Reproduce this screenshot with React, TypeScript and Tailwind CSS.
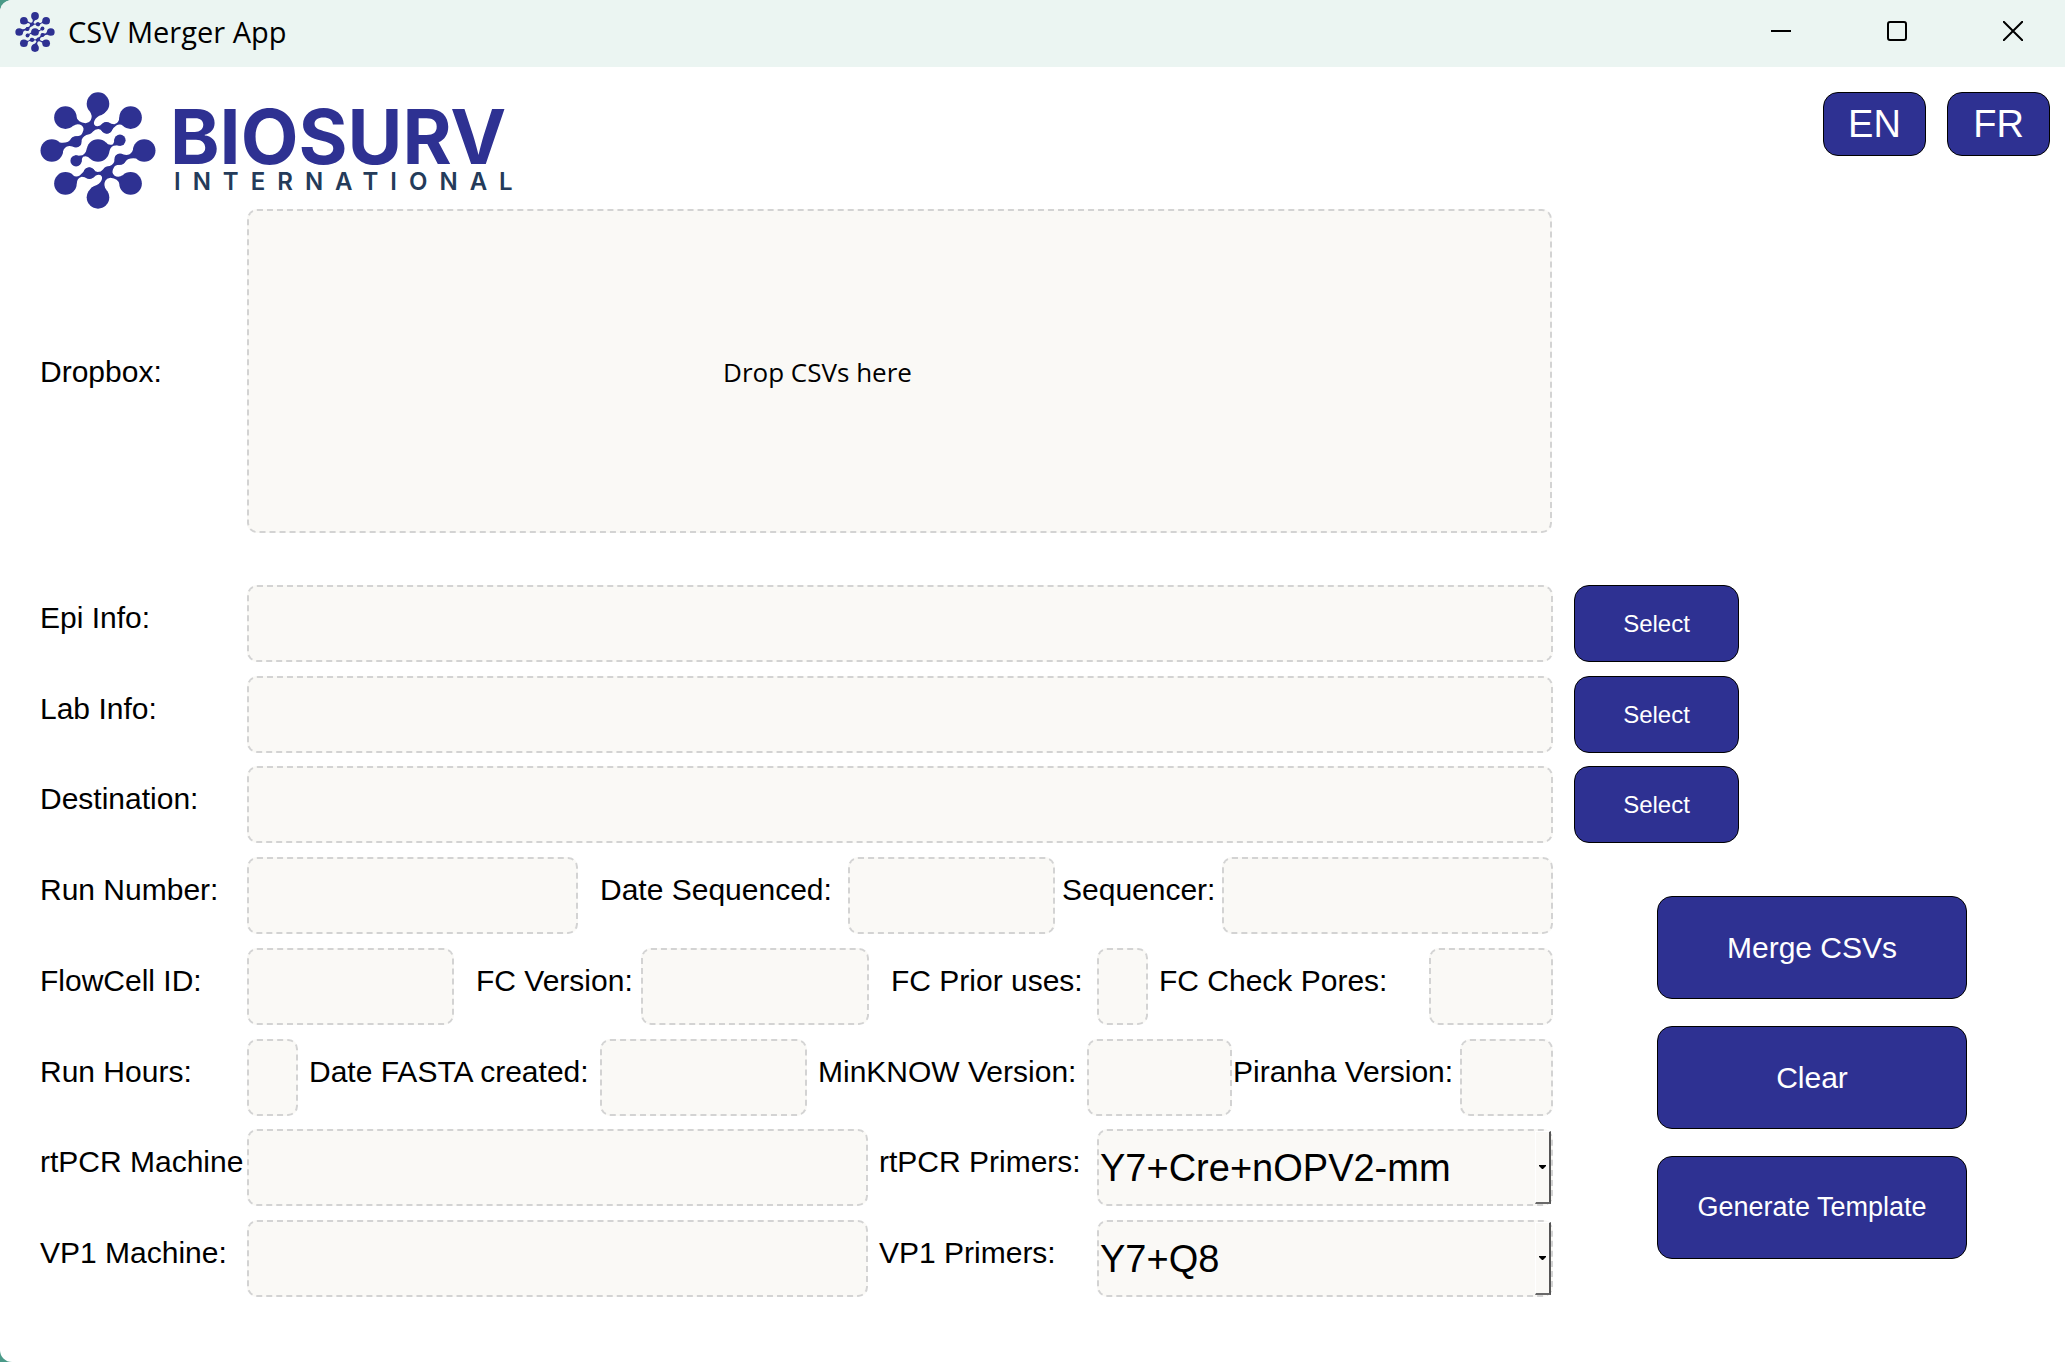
import type { ReactNode } from "react";

function Molecule({ className }: { className: string }) {
  const nodes: [number, number, number][] = [
    [173, 54, 34], [75, 96, 34], [271, 96, 34], [34, 195, 34],
    [312, 195, 34], [75, 294, 34], [271, 294, 34], [173, 336, 34],
    [173, 195, 34], [107, 168, 16], [199, 127, 17], [239, 164, 17],
    [239, 222, 16], [147, 263, 17], [107, 226, 17],
  ];
  const branch =
    "M148 77Q158 90 151 104Q147 112 136 113Q112 110 108 94L98 121Q112 112 124 120Q134 128 126 142Q122 152 108 152Q96 152 90 162Q82 174 58 171L66 205Q68 190 78 184Q86 180 96 183Q110 190 120 180Q124 176 123 168Q124 154 138 148Q150 148 158 138Q164 130 174 130Q182 131 186 138Q199 150 212 139Q216 128 228 120Q238 114 249 120L237 94Q237 112 222 116Q212 116 206 111Q195 107 186 114Q180 122 172 122L166 121Q158 116 162 106Q168 92 184 88Q194 84 197 77Z";
  const arm = "M196 170Q206 182 218 176Q222 172 223 160L243 181Q232 178 220 181Q208 186 206 204Z";
  return (
    <svg viewBox="-1 19 348 352" className={className} fill="#2e3192" aria-hidden="true">
      {nodes.map(([x, y, r]) => (
        <circle key={`${x}-${y}`} cx={x} cy={y} r={r} />
      ))}
      <path d={branch} />
      <path d={branch} transform="rotate(180 173 195)" />
      <path d={arm} />
      <path d={arm} transform="rotate(180 173 195)" />
    </svg>
  );
}

const fieldBox = "h-[77px] w-full min-w-0 rounded-[10px] border-2 border-dashed border-[#d3d3d3] bg-[#faf9f6]";
const buttonBase = "rounded-[15px] border border-black bg-[#2e3192] text-white";

function Label({ id, className = "", children }: { id: string; className?: string; children: ReactNode }) {
  return (
    <label htmlFor={id} className={`pb-3 text-[30px] leading-9 whitespace-nowrap ${className}`}>
      {children}
    </label>
  );
}

function Field({ id }: { id: string }) {
  return <input id={id} type="text" className={`${fieldBox} px-1 text-[38px]`} />;
}

function Combo({ id, options }: { id: string; options: string[] }) {
  return (
    <div className="relative">
      <select id={id} className={`${fieldBox} appearance-none pt-[2px] pl-px text-[38px]`}>
        {options.map((o) => (
          <option key={o}>{o}</option>
        ))}
      </select>
      <span className="pointer-events-none absolute top-[2px] right-[2px] bottom-[2px] flex w-4 items-center justify-center border-t border-r-2 border-b-2 border-l border-t-white border-r-[#555555] border-b-[#696969] border-l-white bg-[#faf9f6]">
        <svg viewBox="0 0 7 4" className="h-1 w-[7px]" aria-hidden="true">
          <path d="M0 0H7V1L4 4H3L0 1Z" />
        </svg>
      </span>
    </div>
  );
}

function Row({ id, label, className = "", children }: { id: string; label: string; className?: string; children: ReactNode }) {
  return (
    <div className="flex items-center">
      <Label id={id} className="w-[207px] shrink-0">
        {label}
      </Label>
      <div className={`grid min-w-0 flex-1 items-center ${className}`}>{children}</div>
    </div>
  );
}

function FileRow({ id, label }: { id: string; label: string }) {
  return (
    <div className="flex items-center gap-[21px]">
      <div className="min-w-0 flex-1">
        <Row id={id} label={label}>
          <Field id={id} />
        </Row>
      </div>
      <div className="w-[491px] shrink-0">
        <button type="button" className={`${buttonBase} h-[77px] w-[165px] text-[24px]`}>
          Select
        </button>
      </div>
    </div>
  );
}

export default function App() {
  return (
    <div className="min-h-screen bg-[#4a9a88] font-['Liberation_Sans',Arial,sans-serif] text-black">
      <div className="flex min-h-screen flex-col overflow-hidden rounded-tl-[12px] rounded-bl-[12px] bg-white">
        <header className="flex h-[67px] items-center justify-between bg-[#ebf5f2] pl-[15px]">
          <div className="flex items-center gap-[13px] pb-1">
            <Molecule className="size-10" />
            <h1 className="font-['Open_Sans',sans-serif] text-[29px]">CSV Merger App</h1>
          </div>
          <div className="flex gap-3 self-stretch pb-[5px]">
            <button type="button" aria-label="Minimize" className="grid w-[104px] place-items-center">
              <svg viewBox="0 0 20 20" className="size-5" aria-hidden="true">
                <path d="M0 10H20" stroke="black" strokeWidth="2" />
              </svg>
            </button>
            <button type="button" aria-label="Maximize" className="grid w-[104px] place-items-center">
              <svg viewBox="0 0 20 20" className="size-5" fill="none" aria-hidden="true">
                <rect x="1" y="1" width="18" height="18" rx="2" stroke="black" strokeWidth="2" />
              </svg>
            </button>
            <button type="button" aria-label="Close" className="grid w-[104px] place-items-center">
              <svg viewBox="0 0 20 20" className="size-5" aria-hidden="true">
                <path d="M0 0L20 20M20 0L0 20" stroke="black" strokeWidth="2" />
              </svg>
            </button>
          </div>
        </header>

        <main className="flex flex-col pb-16 pl-10">
          <div className="flex h-[142px] items-start justify-between pt-[25px] pr-[15px]">
            <div className="flex items-start gap-[14px]">
              <Molecule className="h-[117px] w-[116px]" />
              <div className="flex flex-col pt-[10px] font-['Inter',sans-serif]">
                <span className="text-[75px] leading-[70px] font-bold text-[#2e3192]">BIOSURV</span>
                <span className="pl-1 text-[24px] leading-5 font-semibold tracking-[12px] text-[#243b5a]">
                  INTERNATIONAL
                </span>
              </div>
            </div>
            <div className="flex gap-[21px]">
              <button type="button" className={`${buttonBase} h-16 w-[103px] text-[38px]`}>
                EN
              </button>
              <button type="button" className={`${buttonBase} h-16 w-[103px] text-[38px]`}>
                FR
              </button>
            </div>
          </div>

          <div className="flex items-center pr-[513px]">
            <span className="w-[207px] shrink-0 text-[30px]">Dropbox:</span>
            <div className="grid h-[324px] flex-1 place-items-center rounded-[10px] border-2 border-dashed border-[#d3d3d3] bg-[#faf9f6] pt-[2px] pr-[164px] font-['Open_Sans',sans-serif] text-[26px]">
              Drop CSVs here
            </div>
          </div>

          <div className="mt-[52px] flex flex-col gap-[13px]">
            <div className="flex flex-col gap-[14px]">
              <FileRow id="epi" label="Epi Info:" />
              <FileRow id="lab" label="Lab Info:" />
            </div>
            <FileRow id="dest" label="Destination:" />
          </div>

          <div className="mt-[14px] flex">
            <div className="flex min-w-0 flex-1 flex-col gap-[13px]">
              <div className="flex flex-col gap-[14px]">
                <Row id="run" label="Run Number:" className="grid-cols-[331fr_270fr_207fr_167fr_331fr]">
                  <Field id="run" />
                  <Label id="seqdate" className="pl-[22px]">Date Sequenced:</Label>
                  <Field id="seqdate" />
                  <Label id="sequencer" className="pl-[7px]">Sequencer:</Label>
                  <Field id="sequencer" />
                </Row>
                <Row id="flow" label="FlowCell ID:" className="grid-cols-[207fr_187fr_228fr_228fr_51fr_281fr_124fr]">
                  <Field id="flow" />
                  <Label id="fcver" className="pl-[22px]">FC Version:</Label>
                  <Field id="fcver" />
                  <Label id="prior" className="pl-[22px]">FC Prior uses:</Label>
                  <Field id="prior" />
                  <Label id="pores" className="pl-[11px]">FC Check Pores:</Label>
                  <Field id="pores" />
                </Row>
                <Row id="hours" label="Run Hours:" className="grid-cols-[51fr_302fr_207fr_280fr_145fr_228fr_93fr]">
                  <Field id="hours" />
                  <Label id="fasta" className="pl-[11px]">Date FASTA created:</Label>
                  <Field id="fasta" />
                  <Label id="minknow" className="pl-[11px]">MinKNOW Version:</Label>
                  <Field id="minknow" />
                  <Label id="piranha" className="pl-px">Piranha Version:</Label>
                  <Field id="piranha" />
                </Row>
              </div>
              <div className="flex flex-col gap-[14px]">
                <Row id="rtpcr" label="rtPCR Machine" className="grid-cols-[621fr_229fr_456fr]">
                  <Field id="rtpcr" />
                  <Label id="rtprimers" className="pl-[11px]">rtPCR Primers:</Label>
                  <Combo id="rtprimers" options={["Y7+Cre+nOPV2-mm"]} />
                </Row>
                <Row id="vp1" label="VP1 Machine:" className="grid-cols-[621fr_229fr_456fr]">
                  <Field id="vp1" />
                  <Label id="vp1primers" className="pl-[11px]">VP1 Primers:</Label>
                  <Combo id="vp1primers" options={["Y7+Q8"]} />
                </Row>
              </div>
            </div>
            <div className="flex w-[512px] shrink-0 flex-col gap-[27px] pt-[39px] pl-[104px]">
              <button type="button" className={`${buttonBase} h-[103px] w-[310px] text-[30px]`}>
                Merge CSVs
              </button>
              <button type="button" className={`${buttonBase} h-[103px] w-[310px] text-[30px]`}>
                Clear
              </button>
              <button type="button" className={`${buttonBase} h-[103px] w-[310px] text-[27px]`}>
                Generate Template
              </button>
            </div>
          </div>
        </main>
      </div>
    </div>
  );
}
